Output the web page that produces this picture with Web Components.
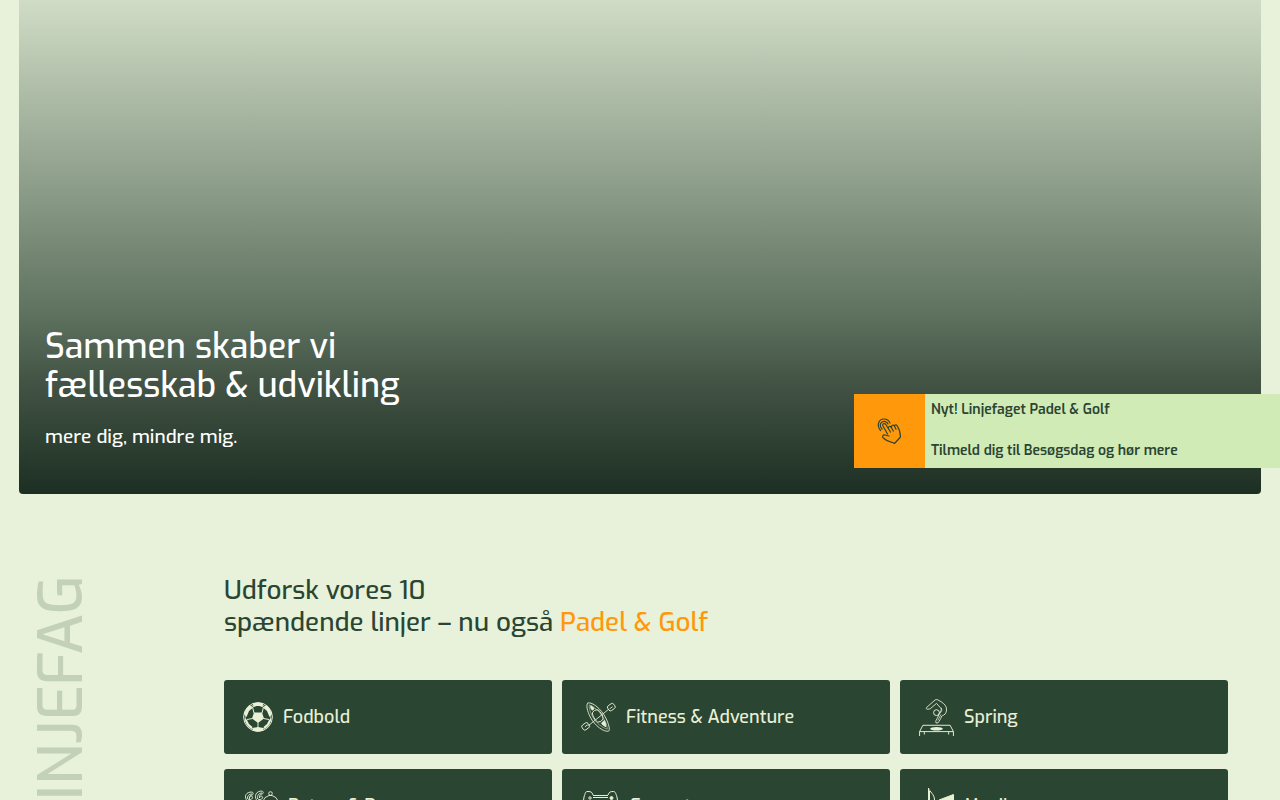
<!DOCTYPE html>
<html lang="da">
<head>
    <meta charset="UTF-8">
    <meta name="viewport" content="width=device-width, initial-scale=1.0">
    <title>Linjefag</title>
    <style>
        html {
            background: #e8f2da;
        }
        body {
            margin: 0;
            height: 100vh;
            overflow: hidden;
            color: #2b4533;
            font-family: Exo, "Exo 2", Roboto, "Noto Sans", sans-serif;
            font-weight: 500;
        }
    </style>
</head>
<body>
    <hero-banner>
        <span slot="title">Sammen skaber vi<br>fællesskab &amp; udvikling</span>
        <span slot="lead">mere dig, mindre mig.</span>
    </hero-banner>
    <news-flag>
        <span slot="first">Nyt! Linjefaget Padel &amp; Golf</span>
        <span slot="second">Tilmeld dig til Besøgsdag og hør mere</span>
    </news-flag>
    <subject-section label="LINJEFAG">
        <span slot="title">Udforsk vores 10<br>spændende linjer – nu også <mark-text>Padel &amp; Golf</mark-text></span>
        <subject-card icon="ball">Fodbold</subject-card>
        <subject-card icon="kayak">Fitness &amp; Adventure</subject-card>
        <subject-card icon="spring">Spring</subject-card>
        <subject-card icon="dance">Rytme &amp; Dans</subject-card>
        <subject-card icon="game">E-sport</subject-card>
        <subject-card icon="music">Musik</subject-card>
    </subject-section>
    <script>
        const icons = {
            ball: `<svg width="30" height="30" viewBox="0 0 30 30" fill="none" stroke="currentColor">
                <circle cx="15" cy="15" r="14.4"/>
                <circle cx="15" cy="15" r="12.8" stroke-width=".7"/>
                <path fill="currentColor" stroke="none" d="M11 10.500h8l2 6-6 4.500-6-4.500zM9.500 1.500q5.500-2 11 0L19.500 4h-9zM1 12Q2.500 6.500 6.500 3L10 5.500 6 9l-2.500 6zM29 12q-1.500-5.500-5.500-9L20 5.500 24 9l2.500 6zM1.500 16l2.500 2 2 4 3.500 3L8.500 27Q2.500 23.500 1.500 16zM28.500 16l-2.500 2-2 4-3.500 3 1 2Q27.500 23.500 28.500 16zM9.500 26l5.500-1 5.500 1v2.500q-5.500 2-11 0z"/>
                <path d="M9.500 5 15 3l5.500 2M11 11 9.500 5M19 11l1.500-6M9.500 16.500 4 17.500M20.500 16.500l5.500 1M15 20.500V26"/>
            </svg>`,
            kayak: `<svg width="35" height="32" viewBox="0 0 36 32" fill="none" stroke="currentColor" stroke-width=".9">
                <path d="M7 1.500C12 .500 21 8 25.500 17c3 6 4.500 12 3 13.500C24 32 14 25 9.500 16 6.500 10 5 4 7 1.500z"/>
                <path d="M8.500 3.500C13 5 19 10 23 17c3 5 4 9 4 11.500C22 27 15 22 11.500 15c-2.500-5-3.500-9-3-11.500z" stroke-width=".5"/>
                <rect x="13" y="8.500" width="8.500" height="13" rx="4" transform="rotate(-30 17 15)"/>
                <path fill="currentColor" d="M10 4.500q2 .5 3.500 3L11.500 9Q9.500 7 10 4.500zM25.500 26q-3-1-4.500-3.500l3-3q2 3 1.500 6.500z"/>
                <path d="M7.500 25 28.500 8"/>
                <rect x="1" y="22.500" width="7.500" height="6" rx="2" transform="rotate(-35 5 25.500)"/>
                <rect x="27.500" y="3" width="7.500" height="6" rx="2" transform="rotate(-35 31 6)"/>
                <path d="m4 26 3-2M29.500 7.500l3-2"/>
            </svg>`,
            spring: `<svg width="35" height="37" viewBox="0 0 36 38" fill="none" stroke="currentColor">
                <path d="M17.500 24.500c-1-1 .5-3.500 2-6l1.500-4c1.500-2 2.500-3.500 1.500-5L18 4.500 11.500 10c-3 1-5 .5-3.500-1.500l8.500-7.500c1-.8 2.500-.5 4 .5 3 1.500 6.500 4 7.500 7 1 4-.5 7-2.500 8-1 .5-2 0-2.500 2-.5 1.500-2 4-3.500 6z" stroke-width=".9"/>
                <path d="m23 9 .5 3-2 3M22.500 16l-3 6" stroke-width=".7"/>
                <circle cx="18" cy="14" r="3"/>
                <path d="M.600 38v-4.500L4 27h28l3.400 6.500V38M.600 33.500h34.800M5.500 34v2.500M30.500 34v2.500"/>
                <ellipse cx="18" cy="30.500" rx="6.500" ry="1.800" fill="currentColor" stroke="none"/>
            </svg>`,
            dance: `<svg width="35" height="36" viewBox="0 0 35 36" fill="none" stroke="currentColor" stroke-width=".9">
                <path d="M9 4C3 4 1 8 3.500 12M9 6C6 6 4 8 4.500 11M9 4c2 1 1 3 0 3-2 0-3 2-2.500 4M6.500 10c0-3 4-2 3 0S6 12 5 11"/>
                <path d="M19 3c-6 0-8 5-5.500 9M19 5c-3 0-5 2-4.500 6M19 3c2 1 1 3 0 3-2 0-3 2-2.500 4M16.500 10c0-3 4-2 3 0S16 12 15 11"/>
                <circle cx="27.500" cy="5.500" r="1.800"/>
                <path d="M20 13q1-4 6-5.500h3q5 1.500 6 5.500M4 14h30l-4 18H8z"/>
            </svg>`,
            game: `<svg width="39" height="32" viewBox="0 0 39 32" fill="none" stroke="currentColor">
                <path d="M12 5c-1-3-2-3.500-5-3.500S4.500 3 3 7L1 21c-1 10 6 10 10 1h17c4 9 11 9 10-1L36 7c-1.500-4-1.500-5.500-4-5.500s-4 .5-5 3.500M12 5.500h15M12 7.500h15"/>
                <circle cx="9" cy="8" r="1.200"/>
                <circle cx="30.500" cy="8" r="1.500" fill="currentColor"/>
            </svg>`,
            music: `<svg width="35" height="38" viewBox="0 0 35 38" fill="none" stroke="currentColor">
                <path d="M9.500 30V1c1 4 6 6 6 12l-1 5M10.500 4v10"/>
                <path fill="currentColor" d="M20 13 34.500 7.500v17L20 20z"/>
                <circle cx="5" cy="31" r="4"/>
            </svg>`
        };

        function define(name, html, setup) {
            const template = document.createElement('template');
            template.innerHTML = html;
            window.customElements.define(name, class extends HTMLElement {
                constructor() {
                    super();
                    this.$shadow = this.attachShadow({mode: 'open'});
                    this.$shadow.appendChild(template.content.cloneNode(true));
                    if (setup) setup(this, this.$shadow);
                }
            });
        }

        define('hero-banner', `
        <style>
            :host {
                display: flex;
                flex-direction: column;
                justify-content: flex-end;
                box-sizing: border-box;
                min-height: 494px;
                margin: 0 19px;
                padding: 0 26px 44px;
                border-radius: 0 0 4px 4px;
                background: linear-gradient(#d0dcc6 0%, #5f7360 63%, #455647 76%, #1c2f22 100%);
                color: #fff;
            }
            h1 {
                margin: 0 0 19px;
                font-size: 34px;
                font-weight: 500;
                line-height: 39px;
            }
            p {
                margin: 0;
                font-size: 19px;
                line-height: 26px;
            }
        </style>
        <h1><slot name="title"></slot></h1>
        <p><slot name="lead"></slot></p>
        `);

        // floats over the lower right corner of the hero
        define('news-flag', `
        <style>
            :host {
                position: absolute;
                top: 394px;
                right: 0;
                width: 426px;
            }
            a {
                display: flex;
                height: 74px;
                background: #d0ebb6;
                color: #2b4533;
                font-size: 14px;
                font-weight: 600;
                line-height: 20px;
                text-decoration: none;
            }
            .icon {
                display: flex;
                flex: 0 0 71px;
                align-items: center;
                justify-content: center;
                background: #ff980a;
            }
            .text {
                display: flex;
                flex-direction: column;
                justify-content: space-between;
                padding: 6px 6px 7px;
            }
        </style>
        <a href="#">
            <span class="icon">
                <svg width="26" height="26" viewBox="0 0 26 26" fill="none" stroke="currentColor" stroke-width="1.200" stroke-linejoin="round" stroke-linecap="round">
                    <path d="M10.500 16 6 8C5 6 7.500 4.500 8.800 6.500L13.500 14M11.500 10.500c-.5-2 1.800-3 2.800-1l2 3.500M14.500 9c-.2-2 2-2.500 3-.8l1.500 3M17.500 8c.2-1.500 2-1.500 2.800 0 2 3 3 6 3.200 11L17.500 25.500c-2-2-6-.5-10.500-5-2.500-1.500-1-4 1-3.500l4 1"/>
                    <path d="M3.500 12.500C-1 7 2 1 7 1c3 0 5 1.500 6 4M5 11C1.500 7 4 3.200 7.500 3.300c2 .2 3 1.200 3.500 2.700"/>
                </svg>
            </span>
            <span class="text">
                <slot name="first"></slot>
                <slot name="second"></slot>
            </span>
        </a>
        `);

        define('mark-text', `
        <style>
            :host {
                display: inline;
                color: #ff980a;
            }
        </style>
        <slot></slot>
        `);

        define('subject-section', `
        <style>
            :host {
                display: flex;
                align-items: flex-start;
                padding: 81px 52px 0 24px;
            }
            .label {
                flex: 0 0 200px;
                color: #c4d1b9;
                font-size: 60px;
                line-height: 76px;
            }
            .label span {
                display: block;
                writing-mode: vertical-rl;
                transform: rotate(180deg);
                width: 76px;
            }
            .content {
                flex: 1;
            }
            h2 {
                margin: 0 0 41px;
                font-size: 26px;
                font-weight: 500;
                line-height: 32px;
            }
            .grid {
                display: grid;
                grid-template-columns: repeat(3, 1fr);
                gap: 15px 10px;
            }
        </style>
        <div class="label"><span></span></div>
        <div class="content">
            <h2><slot name="title"></slot></h2>
            <div class="grid"><slot></slot></div>
        </div>
        `, (host, root) => {
            root.querySelector('.label span').textContent = host.getAttribute('label');
        });

        define('subject-card', `
        <style>
            :host {
                display: block;
            }
            a {
                display: flex;
                align-items: center;
                gap: 10px;
                height: 74px;
                box-sizing: border-box;
                padding: 0 19px;
                border-radius: 3px;
                background: #2b4533;
                color: #e8f0d6;
                font-size: 18px;
                line-height: 24px;
                text-decoration: none;
            }
            .icon {
                display: flex;
            }
        </style>
        <a href="#"><span class="icon"></span><slot></slot></a>
        `, (host, root) => {
            root.querySelector('.icon').innerHTML = icons[host.getAttribute('icon')];
        });
    </script>
</body>
</html>
